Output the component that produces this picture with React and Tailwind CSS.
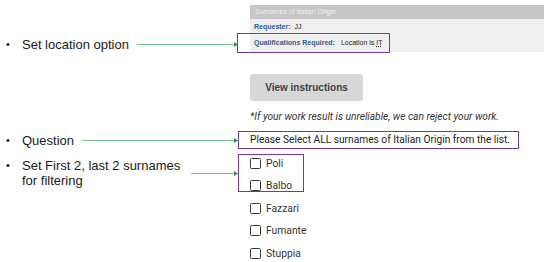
import React from 'react';

const Arrow = ({ className = '' }) => (
  <div className={`flex items-center flex-1 ${className}`}>
    <div className="flex-1 h-px bg-[#74c495]" />
    <svg width="4" height="5" viewBox="0 0 4 5" className="block">
      <path d="M0 0 L4 2.5 L0 5 Z" fill="#2f8f4f" />
    </svg>
  </div>
);

const Note = ({ children, arrowClass = 'ml-[8px]' }) => (
  <div className="flex items-center w-full pl-[6px] text-[13px] leading-[15px] text-[#1a1a1a]">
    <span className="w-[16px] text-[11px]">•</span>
    <span>{children}</span>
    <Arrow className={arrowClass} />
  </div>
);

const Box = () => (
  <span className="w-[11px] h-[11px] border-[1.5px] border-[#3a3a3a] rounded-[1.5px] shrink-0" />
);

const Item = ({ label, className = '' }) => (
  <div className={`flex items-center gap-[5px] ${className}`}>
    <Box />
    <span className="text-[10.3px] text-[#333]">{label}</span>
  </div>
);

export default function App() {
  const purple = 'border-[#7437a6]';
  return (
    <div className="w-[550px] h-[262px] bg-white overflow-hidden pt-[5px] font-['Liberation_Sans',Arial,sans-serif]">
      {/* panel row */}
      <div className="flex">
        <div className="w-[238px] shrink-0 flex items-end">
          <div className="w-full h-[16px] flex items-center">
            <Note>Set location option</Note>
          </div>
        </div>
        <div className="flex-1 pl-[12px] pr-[6px]">
          <div className="h-[14px] bg-[#c6c6c6] text-[7px] leading-[14px] text-[#efefef] pl-[5px]">
            Surnames of Italian Origin
          </div>
          <div className="bg-[#efefef] h-[33px] pl-[4px] text-[7px] text-[#222]">
            <div className="h-[16px] flex items-center gap-[4px]">
              <span className="font-bold text-[#2e5d94]">Requester:</span>
              <span>JJ</span>
            </div>
            <div className="relative h-[16px] flex items-center gap-[6px]">
              <span className={`absolute -left-[17px] -top-[2px] w-[153px] h-[20px] border-[1.5px] ${purple}`} />
              <span className="font-bold text-[#2e5d94]">Qualifications Required:</span>
              <span>
                Location is <span className="underline decoration-dotted">IT</span>
              </span>
            </div>
          </div>
        </div>
      </div>

      {/* button */}
      <div className="flex mt-[22px]">
        <div className="w-[238px] shrink-0" />
        <div className="pl-[12px]">
          <div className="w-[113px] h-[27px] rounded-[3px] bg-[#d7d7d7] flex items-center justify-center text-[10px] font-bold text-[#3f3f3f]">
            View instructions
          </div>
        </div>
      </div>

      {/* disclaimer */}
      <div className="flex mt-[8px] font-['Roboto',sans-serif]">
        <div className="w-[238px] shrink-0" />
        <div className="pl-[12px] h-[16px] flex items-center italic text-[10.2px] text-[#333] whitespace-nowrap">
          *If your work result is unreliable, we can reject your work.
        </div>
      </div>

      {/* question */}
      <div className="flex mt-[6px]">
        <div className="w-[238px] shrink-0 flex items-center">
          <Note>Question</Note>
        </div>
        <div className={`w-[281px] h-[18px] border-[1.5px] ${purple} pl-[11px] flex items-center font-['Roboto',sans-serif] text-[10.2px] text-[#222] whitespace-nowrap`}>
          Please Select ALL surnames of Italian Origin from the list.
        </div>
      </div>

      {/* first two */}
      <div className="flex mt-[5px] font-['Roboto',sans-serif]">
        <div className="w-[238px] shrink-0 flex items-center font-['Liberation_Sans',Arial,sans-serif]">
          <div className="flex items-center w-full pl-[6px] text-[13px] leading-[15px] text-[#1a1a1a]">
            <span className="w-[16px] self-start text-[11px]">•</span>
            <span>
              Set First 2, last 2 surnames
              <br />
              for filtering
            </span>
            <Arrow className="ml-[11px]" />
          </div>
        </div>
        <div className={`w-[66px] h-[38px] border-[1.5px] ${purple} pl-[11px] flex flex-col`}>
          <Item label="Poli" className="h-[14px] mt-[1.5px]" />
          <Item label="Balbo" className="h-[14px] mt-[8px]" />
        </div>
      </div>

      {/* remaining */}
      <div className="flex mt-[5px] font-['Roboto',sans-serif]">
        <div className="w-[238px] shrink-0" />
        <div className="pl-[12px] flex flex-col">
          <Item label="Fazzari" className="h-[22.5px]" />
          <Item label="Fumante" className="h-[22.5px]" />
          <Item label="Stuppia" className="h-[22.5px]" />
        </div>
      </div>
    </div>
  );
}
